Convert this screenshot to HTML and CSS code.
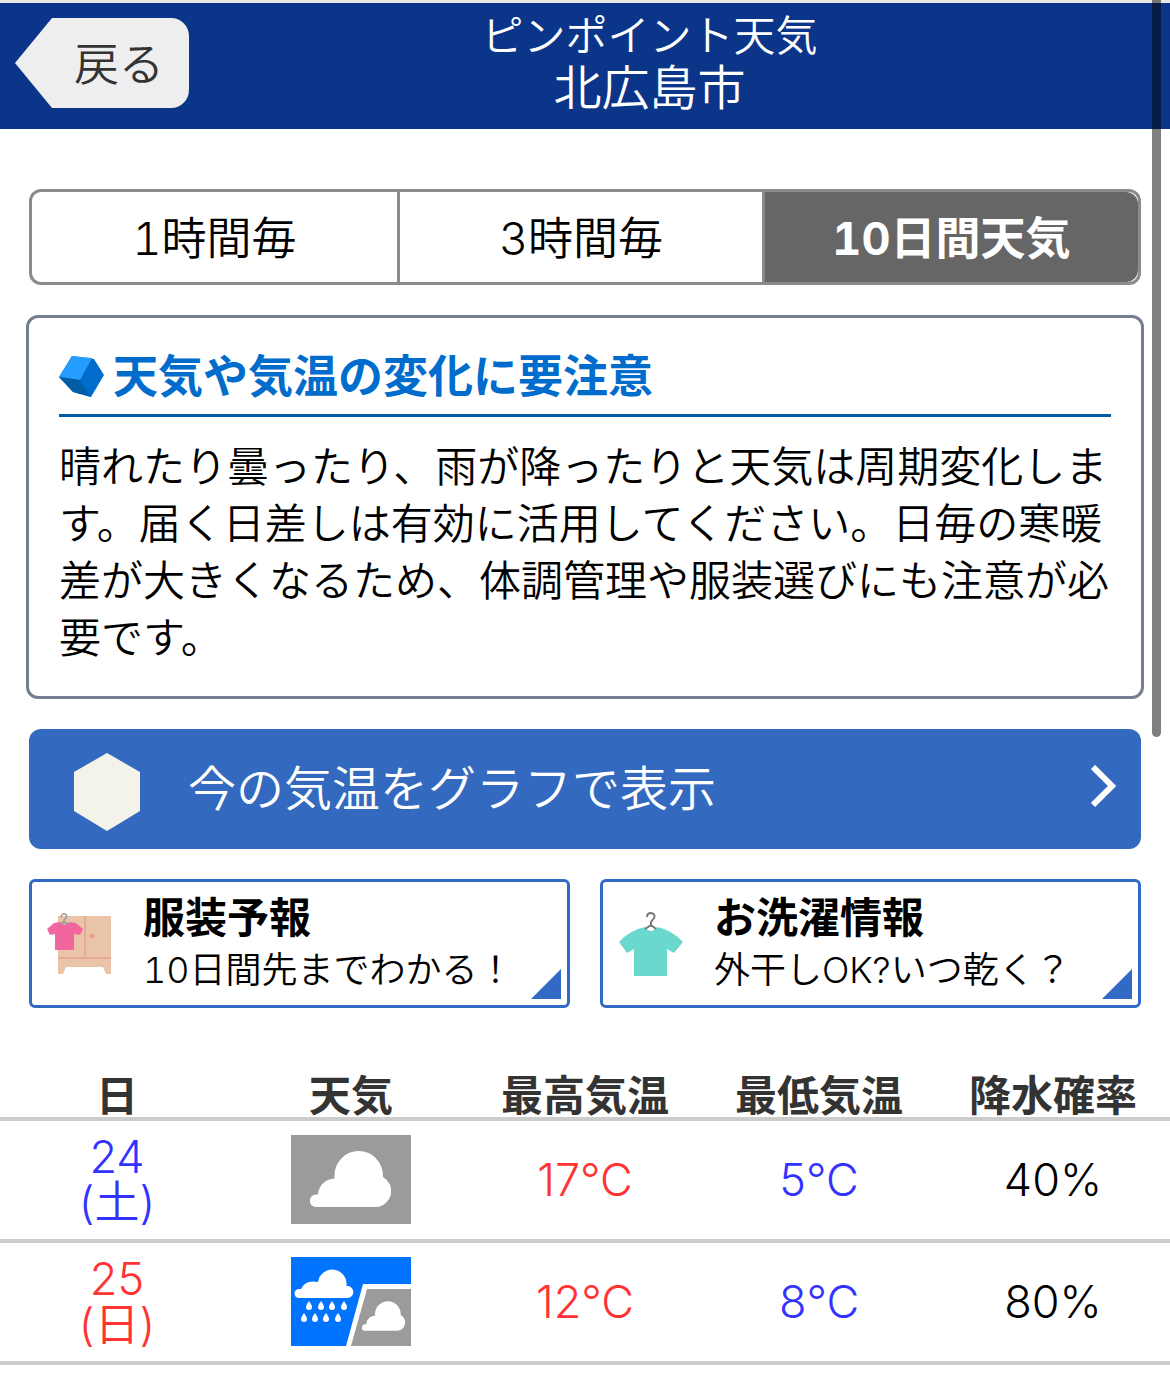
FILE: index.html
```html
<!DOCTYPE html>
<html lang="ja">
<head>
  <meta charset="UTF-8" />
  <meta name="viewport" content="width=device-width, initial-scale=1" />
  <title>ピンポイント天気 北広島市</title>
  <link rel="stylesheet" href="styles.css">
</head>
<body>

  <svg width="0" height="0" class="defs" aria-hidden="true">
    <symbol id="cloud" viewBox="0 0 81 56">
      <path d="M6 56a6 6 0 0 1 0-12.400H8C8.500 35 15 28 24.500 27.500V24.500a24.200 24.500 0 0 1 48.400 0V26A16 16 0 0 1 66 56Z"/>
    </symbol>
  </svg>

  <header class="header">
    <a class="back" href="#">戻る</a>
    <h1 class="title">
      <span class="title-sub">ピンポイント天気</span>
      <span class="title-city">北広島市</span>
    </h1>
  </header>

  <main>
    <nav class="tabs">
      <a href="#">1時間毎</a>
      <a href="#">3時間毎</a>
      <a href="#" class="active">10日間天気</a>
    </nav>

    <section class="notice">
      <h2>
        <svg width="45" height="45" viewBox="0 0 45 45" aria-hidden="true">
          <path d="M13 2 35 5 45 21 32 43 14 38 0 23Z" fill="#006dcc"/>
          <path d="M13 2 33 4 21 26 0 23Z" fill="#259dff"/>
          <path d="M0 23 21 26 32 43 14 38Z" fill="#005da6"/>
        </svg>
        天気や気温の変化に要注意
      </h2>
      <p>晴れたり曇ったり、雨が降ったりと天気は周期変化します。届く日差しは有効に活用してください。日毎の寒暖差が大きくなるため、体調管理や服装選びにも注意が必要です。</p>
    </section>

    <a class="graph" href="#">
      <svg width="66" height="84" viewBox="0 -6 66 84" aria-hidden="true">
        <path d="M33 0 66 19V58L33 78 0 58V19Z" fill="#f4f3ea"/>
      </svg>
      <span>今の気温をグラフで表示</span>
      <svg class="chevron" width="26" height="48" viewBox="0 0 26 48" aria-hidden="true">
        <path d="M2 2 21 21 2 40" fill="none" stroke="#fff" stroke-width="6"/>
      </svg>
    </a>

    <div class="cards">
      <a class="card" href="#">
        <svg width="66" height="66" viewBox="0 0 66 66" aria-hidden="true">
          <path d="M11 5H64V63H59L56 56H19L16 63H11Z" fill="#eac4a8"/>
          <path d="M38 5V47M11 47H64" stroke="#e9a993" stroke-width="2"/>
          <circle cx="45" cy="25" r="2.500" fill="#e9a08f"/>
          <path d="M7 12 13 11Q18 16 23 11L29 12 36 18 33 24 27 23V39H8V23L3 24 0 18Z" fill="#f2669f"/>
          <path d="M14 6Q15 2 18 3 22 5 17 9V11L13 13M17 11 22 13" fill="none" stroke="#999" stroke-width="1.500"/>
        </svg>
        <span class="card-text">
          <strong>服装予報</strong>
          <span>10日間先までわかる！</span>
        </span>
      </a>
      <a class="card" href="#">
        <svg width="66" height="66" viewBox="0 0 66 66" aria-hidden="true">
          <path d="M1 31Q12 19 27 16 33 24 39 16 54 19 65 31L56 42 49 38V65H16V38L9 42Z" fill="#6bd8cd"/>
          <path d="M29 6Q29 2 33 2 38 3 36 7L33 11V14L27 18M33 14 38 18" fill="none" stroke="#777" stroke-width="2"/>
        </svg>
        <span class="card-text">
          <strong>お洗濯情報</strong>
          <span>外干しOK?いつ乾く？</span>
        </span>
      </a>
    </div>

    <table class="forecast">
      <thead>
        <tr>
          <th>日</th>
          <th>天気</th>
          <th>最高気温</th>
          <th>最低気温</th>
          <th>降水確率</th>
        </tr>
      </thead>
      <tbody>
        <tr>
          <td class="cold">24<br>(土)</td>
          <td class="icon">
            <svg width="120" height="89" viewBox="0 0 120 89" role="img" aria-label="曇り">
              <path d="M0 0H120V89H0Z" fill="#9b9b9b"/>
              <use href="#cloud" x="19" y="16" width="81" height="56" fill="#fff"/>
            </svg>
          </td>
          <td class="hot">17℃</td>
          <td class="cold">5℃</td>
          <td>40%</td>
        </tr>
        <tr>
          <td class="hot">25<br>(日)</td>
          <td class="icon">
            <svg width="120" height="89" viewBox="0 0 120 89" role="img" aria-label="雨のち曇り">
              <path d="M0 0H120V89H0Z" fill="#0073ff"/>
              <path d="M55 89 72 27H120V89Z" fill="#fff"/>
              <path d="M60 89 76 32H120V89Z" fill="#9b9b9b"/>
              <path d="M8 41a4.500 4.500 0 0 1 0-9H10C13 26 18 23 27 25A14.300 14.300 0 0 1 55.500 29 6 6 0 0 1 57 41Z" fill="#fff"/>
              <use href="#cloud" x="71" y="44" width="43" height="30" fill="#fff"/>
              <g fill="#fff">
                <path id="drop" d="M18 44Q15 48 15 50a3 3 0 0 0 6 0Q21 48 18 44Z"/>
                <use href="#drop" x="12"/>
                <use href="#drop" x="23"/>
                <use href="#drop" x="35"/>
                <use href="#drop" x="-5" y="12"/>
                <use href="#drop" x="6" y="12"/>
                <use href="#drop" x="17" y="12"/>
                <use href="#drop" x="29" y="12"/>
              </g>
            </svg>
          </td>
          <td class="hot">12℃</td>
          <td class="cold">8℃</td>
          <td>80%</td>
        </tr>
      </tbody>
    </table>
  </main>

  <div class="scrollbar"></div>

</body>
</html>
```
FILE: styles.css
```css
* {
  box-sizing: border-box;
}

body {
  margin: 0;
  font-family: Inter, "Noto Sans CJK JP", sans-serif;
  font-weight: 350;
  color: #000;
  background: #fff;
}

a {
  color: inherit;
  text-decoration: none;
}

svg {
  flex: none;
}

.defs {
  position: absolute;
}

/* Header */
.header {
  display: flex;
  align-items: flex-start;
  height: 129px;
  padding: 0 60px 0 15px;
  border-top: 3px solid #e8e8e8;
  background: #0b3589;
  color: #fff;
}

.back {
  width: 174px;
  height: 90px;
  margin-top: 15px;
  padding: 3px 0 0 34px;
  border-radius: 0 18px 18px 0;
  background: #eee;
  color: #333;
  font-size: 45px;
  line-height: 88px;
  text-align: center;
  clip-path: polygon(37px 0, 100% 0, 100% 100%, 37px 100%, 0 50%);
}

.title {
  flex: 1;
  margin: 7px 0 0;
  font-weight: 350;
  text-align: center;
}

.title span {
  display: block;
  line-height: 52px;
}

.title-sub {
  font-size: 42px;
}

.title-city {
  font-size: 48px;
}

/* Tabs */
.tabs {
  display: grid;
  grid-template-columns: 33% 33% 34%;
  margin: 60px 29px 30px;
  border: 3px solid #8b8b8b;
  border-radius: 12px;
  font-variant-numeric: tabular-nums;
}

.tabs a {
  height: 90px;
  padding-top: 3px;
  font-size: 45px;
  line-height: 88px;
  text-align: center;
}

.tabs a + a {
  border-left: 3px solid #8b8b8b;
}

.tabs .active {
  border-radius: 0 12px 12px 0;
  background: #666;
  color: #fff;
  font-weight: 700;
}

/* Notice */
.notice {
  margin: 0 26px 30px;
  padding: 30px;
  border: 3px solid #757e8e;
  border-radius: 12px;
}

.notice h2 {
  display: flex;
  align-items: center;
  gap: 9px;
  margin: 0 0 21px;
  padding-bottom: 9px;
  border-bottom: 3px solid #005da6;
  color: #006dcc;
  font-size: 45px;
  line-height: 57px;
}

.notice p {
  margin: 0;
  font-size: 42px;
  line-height: 57px;
}

/* Graph button */
.graph {
  display: flex;
  align-items: center;
  gap: 48px;
  height: 120px;
  margin: 0 29px 30px;
  padding: 0 24px 0 45px;
  border-radius: 12px;
  background: #3469c0;
  color: #fff;
  font-size: 48px;
  line-height: 60px;
}

.chevron {
  margin-left: auto;
}

/* Cards */
.cards {
  display: flex;
  gap: 30px;
  margin: 0 29px 67px;
}

.card {
  position: relative;
  display: flex;
  flex: 1;
  align-items: center;
  gap: 30px;
  height: 129px;
  padding-left: 15px;
  border: 3px solid #3169c4;
  border-radius: 6px;
}

.card::after {
  content: "";
  position: absolute;
  right: 6px;
  bottom: 6px;
  width: 30px;
  height: 30px;
  background: #3169c4;
  clip-path: polygon(100% 0, 100% 100%, 0 100%);
}

.card-text {
  font-variant-numeric: tabular-nums;
}

.card-text > * {
  display: block;
  font-size: 36px;
  line-height: 53px;
}

.card-text strong {
  font-size: 42px;
  font-weight: 700;
}

/* Forecast */
.forecast {
  width: 100%;
  border-collapse: collapse;
  table-layout: fixed;
  text-align: center;
}

.forecast tr {
  border-bottom: 4px solid #ccc;
}

.forecast th {
  padding: 0;
  color: #333;
  font-size: 42px;
  line-height: 42px;
}

.forecast td {
  height: 122px;
  padding: 0;
  font-size: 45px;
  line-height: 46px;
}

.forecast .icon {
  padding-bottom: 2px;
}

.forecast td svg {
  display: block;
  margin: 0 auto;
}

.forecast .hot {
  color: #f33;
}

.forecast .cold {
  color: #33f;
}

.scrollbar {
  position: absolute;
  top: 0;
  right: 9px;
  width: 9px;
  height: 737px;
  border-radius: 0 0 5px 5px;
  background: rgba(0, 0, 0, 0.5);
}
```
